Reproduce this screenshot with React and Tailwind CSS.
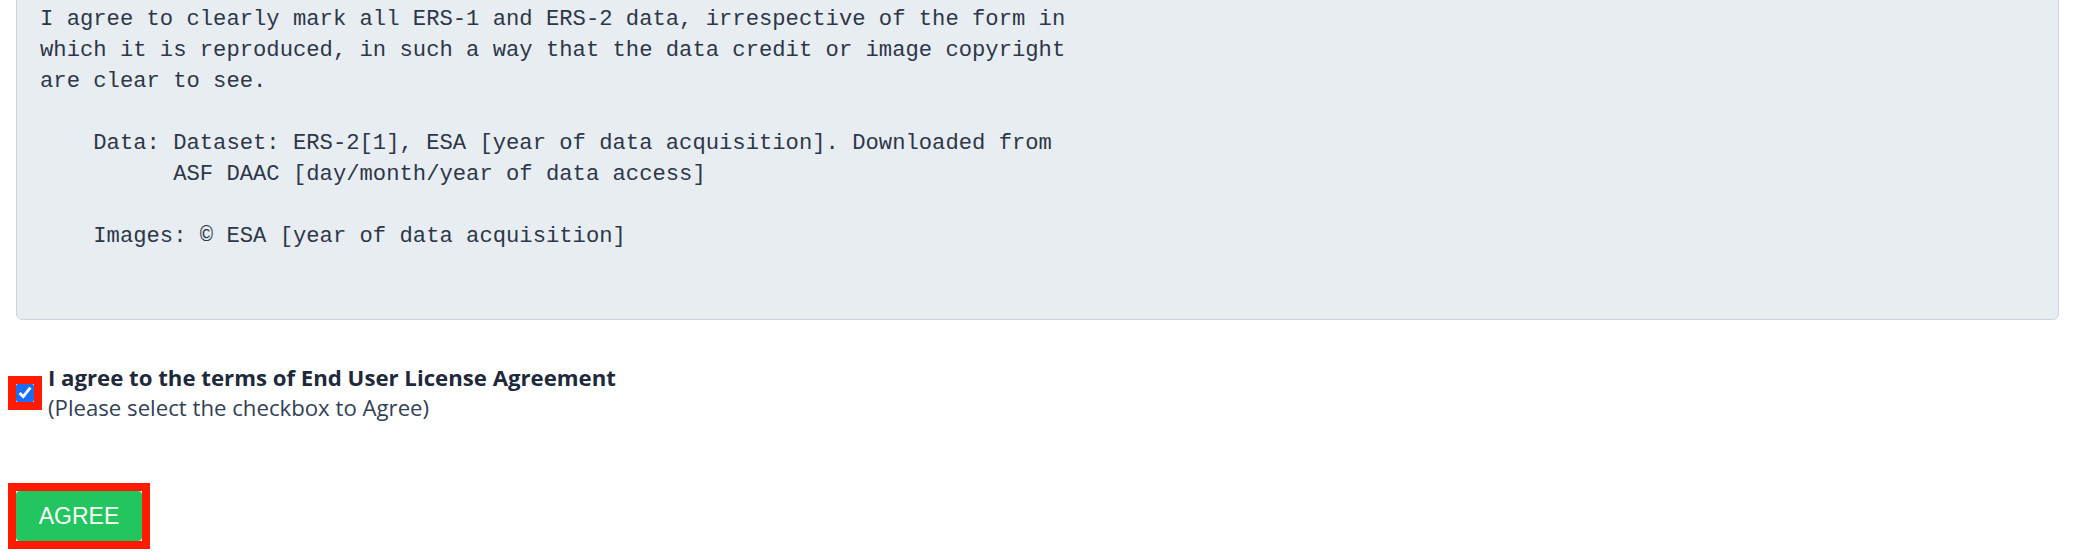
import React, { useState } from 'react';

const licenseText = `I agree to clearly mark all ERS-1 and ERS-2 data, irrespective of the form in
which it is reproduced, in such a way that the data credit or image copyright
are clear to see.

    Data: Dataset: ERS-2[1], ESA [year of data acquisition]. Downloaded from
          ASF DAAC [day/month/year of data access]

    Images: © ESA [year of data acquisition]`;

const App = () => {
  const [agreed, setAgreed] = useState(true);

  return (
    <div className="min-h-screen bg-white pl-2 pr-5 overflow-hidden">
      {/* License text */}
      <div className="ml-2 -mt-[18px] bg-[#e8edf2] border border-[#c9d4e0] rounded-md pl-[23px] pr-6 pt-[21px] pb-[67px]">
        <pre
          className="text-[22.2px] leading-[31px] text-[#2d3748] whitespace-pre"
          style={{ fontFamily: '"Liberation Mono", "Courier New", monospace' }}
        >
          {licenseText}
        </pre>
      </div>

      {/* Checkbox */}
      <div className="flex items-center gap-[6px] mt-[43px]" style={{ fontFamily: '"Open Sans", sans-serif' }}>
        <span className="inline-flex border-8 border-[#ff1a00]">
          <input
            type="checkbox"
            checked={agreed}
            onChange={e => setAgreed(e.target.checked)}
            className="w-[18px] h-[18px] m-0 accent-[#1b6ef3]"
          />
        </span>
        <div className="text-[22.2px] leading-[30px]">
          <div className="font-bold text-[#1e293b]">I agree to the terms of End User License Agreement</div>
          <div className="text-[#334155]">(Please select the checkbox to Agree)</div>
        </div>
      </div>

      {/* Agree button */}
      <div className="mt-[60px]">
        <span className="inline-flex border-8 border-[#ff1a00] bg-white">
          <button
            className="w-[126px] h-[50px] bg-[#22c55e] text-white text-[23px] rounded"
            style={{ fontFamily: '"Liberation Sans", Arial, sans-serif' }}
          >
            AGREE
          </button>
        </span>
      </div>
    </div>
  );
};

export default App;
